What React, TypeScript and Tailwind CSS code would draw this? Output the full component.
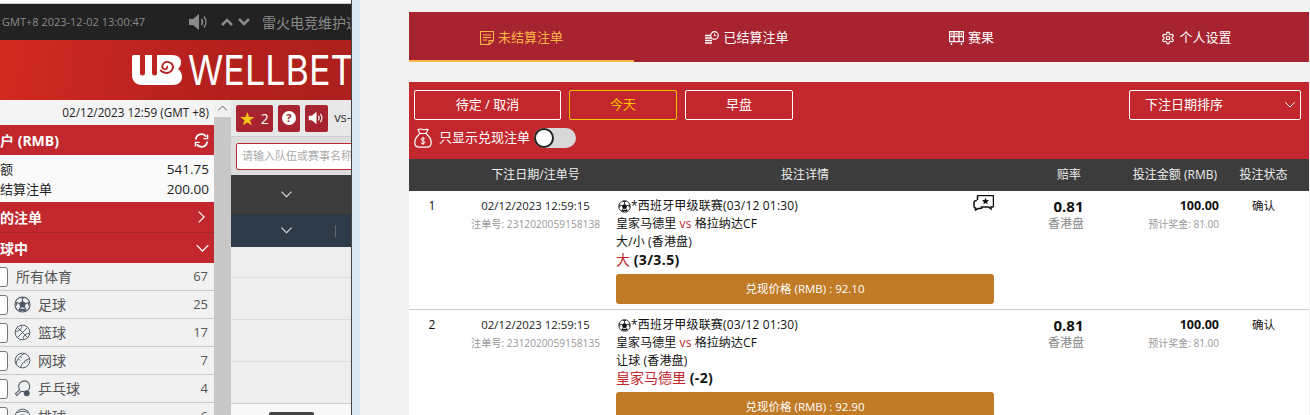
import React from "react";

function Chevron({ dir = "down", className = "" }: { dir?: "down" | "right" | "up"; className?: string }) {
  const d = dir === "down" ? "M2 5l7 7 7-7" : dir === "up" ? "M2 12l7-7 7 7" : "M6 2l7 7-7 7";
  return (
    <svg viewBox="0 0 18 18" className={className} fill="none" stroke="currentColor" strokeWidth="1.5">
      <path d={d} />
    </svg>
  );
}

function Speaker({ className = "" }: { className?: string }) {
  return (
    <svg viewBox="0 0 22 18" className={className} fill="none" stroke="currentColor">
      <path d="M1 6h4l6-5v16l-6-5H1z" fill="currentColor" stroke="none" />
      <path d="M13.5 6c1.2 1.8 1.2 4.2 0 6M16 3.5c2.4 3.2 2.4 7.8 0 11" strokeWidth="1.5" />
    </svg>
  );
}

function Logo() {
  return (
    <svg viewBox="0 0 50 30" className="w-[50px] h-[30px] shrink-0">
      <path
        d="M0 2a2 2 0 0 1 2-2h6v18a2.5 2.5 0 0 0 5 0V0h7v18a2.500 2.500 0 0 0 5 0V0h15c6 0 9 3 9 7 0 3-1 5-3 7 3 2 4 5 4 8 0 5-4 8-9 8H10C4 30 0 26 0 20z"
        fill="#fff"
      />
      <path d="M28 15c4 4 9 4 12 0 3-4-1-9-6-8-4 1-5 6-2 7 2 1 4-1 3-3" fill="none" stroke="#b5211f" strokeWidth="1.8" />
    </svg>
  );
}

function Soccer({ className = "" }: { className?: string }) {
  return (
    <svg viewBox="0 0 18 18" className={className} fill="none" stroke="currentColor" strokeWidth="1.1">
      <circle cx="9" cy="9" r="8" />
      <path d="M9 5.8l3 2.2-1.100 3.600H7.100L6 8z" fill="currentColor" />
      <path d="M9 5.800V3M12 8l2.600-.900M10.900 11.600l1.600 2.200M7.100 11.600l-1.600 2.200M6 8l-2.600-.900" />
      <path d="M6.500 1.600L9 3l2.500-1.400zM16.200 6L14.600 7.100l1.100 3.500zM1.800 6l1.600 1.100-1.100 3.500zM5 15.600l.500-1.800h7l.500 1.800z" fill="currentColor" strokeWidth="0.5" />
    </svg>
  );
}

function Basket({ className = "" }: { className?: string }) {
  return (
    <svg viewBox="0 0 18 18" className={className} fill="none" stroke="currentColor" strokeWidth="1">
      <circle cx="9" cy="9" r="7.8" />
      <path d="M3.5 3.500l11 11M14.500 3.500l-11 11M8 1.300c1 3-1.500 6.500-6.700 6.500M16.700 10c-5 0-7.500 3.500-6.700 6.700" />
    </svg>
  );
}

function Tennis({ className = "" }: { className?: string }) {
  return (
    <svg viewBox="0 0 18 18" className={className} fill="none" stroke="currentColor" strokeWidth="1">
      <circle cx="9" cy="9" r="7.8" />
      <path d="M11 1.500C6 4 3 8 2 13M16.500 7c-4.500 1-8 4.500-9.500 9.700" />
      <path d="M7 5l1.500 1.500M5 7.500l1.500 1.500M11 10.500l1 1.500M13.500 9l.8 1.500" strokeWidth="0.9" />
    </svg>
  );
}

function Pingpong({ className = "" }: { className?: string }) {
  return (
    <svg viewBox="0 0 18 18" className={className} fill="none" stroke="currentColor" strokeWidth="1.1">
      <path d="M6 10.500C4 7 5 3 8.500 1.500 12-.1 16 2 16.500 6c.4 2.500-.5 4-1.500 5" />
      <path d="M6 10.500l-4.500 4L3 16.500l4.500-4.500c1.500 0 2.500 0 3.500.5" />
      <circle cx="13.5" cy="14" r="2.6" fill="currentColor" />
    </svg>
  );
}

function Volley({ className = "" }: { className?: string }) {
  return (
    <svg viewBox="0 0 18 18" className={className} fill="none" stroke="currentColor" strokeWidth="1">
      <circle cx="9" cy="9" r="7.8" />
      <path d="M3 5c4-2 9-2 12 0M2 9c4-2 10-2 14 0" />
    </svg>
  );
}

function SportRow({ icon, label, count }: { icon?: React.ReactNode; label: string; count: number }) {
  return (
    <div className="h-[28px] shrink-0 flex items-center border-b border-[#c8c8c8] text-[#555] bg-[#f1f1f1] pr-[6px] text-[14px]">
      <span className="w-[10px] h-[20px] -ml-[2px] shrink-0 bg-white border border-[#777] rounded-r-[3px]" />
      {icon ? <span className="ml-[6px] w-[17px] h-[17px] shrink-0 text-[#4b5563]">{icon}</span> : null}
      <span className={icon ? "ml-[7px]" : "ml-[8px]"}>{label}</span>
      <span className="ml-auto text-[13px]">{count}</span>
    </div>
  );
}

function LeftWindow() {
  return (
    <div className="w-[352px] h-[415px] shrink-0 flex flex-col overflow-hidden border-r border-[#444] bg-white">
      <div className="h-[4px] shrink-0 bg-white border-b border-[#ccc]" />
      <div className="h-[36px] shrink-0 bg-[#222] text-[#8a8a8a] flex items-center whitespace-nowrap overflow-hidden pl-[2px]">
        <span className="text-[11px] w-[186px] shrink-0">GMT+8 2023-12-02 13:00:47</span>
        <Speaker className="w-[22px] h-[18px] shrink-0 text-[#8a8a8a]" />
        <svg viewBox="0 0 12 8" className="ml-[11px] w-[12px] h-[8px] shrink-0 text-[#8a8a8a]" fill="none" stroke="currentColor" strokeWidth="2.6"><path d="M1 7l5-5 5 5" /></svg>
        <svg viewBox="0 0 12 8" className="ml-[5px] w-[12px] h-[8px] shrink-0 text-[#8a8a8a]" fill="none" stroke="currentColor" strokeWidth="2.6"><path d="M1 1l5 5 5-5" /></svg>
        <span className="ml-[12px] text-[14px]">雷火电竞维护通知</span>
      </div>
      <div className="h-[60px] shrink-0 bg-[linear-gradient(100deg,#d22a20_0%,#bc2320_45%,#b5211d_60%,#ad201d_100%)] flex items-center pl-[132px] overflow-hidden">
        <Logo />
        <span className="ml-[6px] text-white text-[41px] leading-none font-[Inter,sans-serif] font-normal whitespace-nowrap origin-left scale-x-[0.875]">WELLBET</span>
      </div>
      <div className="flex-1 flex min-h-0">
        <div className="w-[214px] shrink-0 flex flex-col overflow-hidden">
          <div className="h-[25px] shrink-0 bg-[#f4f4f4] flex items-center justify-end pr-[5px] text-[11.7px] text-[#222]">02/12/2023 12:59 (GMT +8)</div>
          <div className="h-[30px] shrink-0 bg-[#c1272d] text-white font-bold text-[14px] flex items-center pr-[5px] -ml-[14px]">
            <span>账户 (RMB)</span>
            <svg viewBox="0 0 16 16" className="ml-auto w-[15px] h-[15px]" fill="none" stroke="currentColor" strokeWidth="2"><path d="M2 7a6 6 0 0 1 11-3M14 9a6 6 0 0 1-11 3" /><path d="M14.5 1.500V6H10M1.500 14.500V10H6" strokeWidth="1.5" /></svg>
          </div>
          <div className="h-[47px] shrink-0 bg-[#fafafa] flex flex-col justify-center text-[13px] text-[#222] pr-[5px] leading-[20px]">
            <div className="flex justify-between -ml-[13px]"><span>余额</span><span className="text-[13.5px]">541.75</span></div>
            <div className="flex justify-between -ml-[13px]"><span>未结算注单</span><span className="text-[13.5px]">200.00</span></div>
          </div>
          <div className="h-[31px] shrink-0 bg-[#c1272d] border-b border-[#a6232b] text-white font-bold text-[14px] flex items-center pr-[6px] -ml-[14px]">
            <span>我的注单</span>
            <Chevron dir="right" className="ml-auto w-[14px] h-[14px]" />
          </div>
          <div className="h-[30px] shrink-0 bg-[#c1272d] text-white font-bold text-[14px] flex items-center pr-[4px] -ml-[14px]">
            <span>滚球中</span>
            <Chevron className="ml-auto w-[15px] h-[15px]" />
          </div>
          <SportRow label="所有体育" count={67} />
          <SportRow icon={<Soccer className="w-full h-full" />} label="足球" count={25} />
          <SportRow icon={<Basket className="w-full h-full" />} label="篮球" count={17} />
          <SportRow icon={<Tennis className="w-full h-full" />} label="网球" count={7} />
          <SportRow icon={<Pingpong className="w-full h-full" />} label="乒乓球" count={4} />
          <SportRow icon={<Volley className="w-full h-full" />} label="排球" count={6} />
        </div>
        <div className="w-[17px] shrink-0 bg-[#c8c8c8] flex flex-col">
          <div className="h-[17px] bg-[#f1f1f1] text-[#555] flex items-center justify-center">
            <Chevron dir="up" className="w-[11px] h-[11px]" />
          </div>
        </div>
        <div className="flex-1 min-w-0 flex flex-col overflow-hidden bg-[#eee]">
          <div className="h-[37px] shrink-0 bg-[#e8e8e8] border-b border-[#ccc] flex items-center pl-[5px] gap-[5px] whitespace-nowrap">
            <div className="w-[38px] h-[27px] rounded-[2px] bg-[#a6232f] flex items-center justify-center gap-[6px] text-white text-[14px]"><span className="text-[#f5c518] text-[15px] leading-none">★</span>2</div>
            <div className="w-[23px] h-[27px] rounded-[2px] bg-[#a6232f] flex items-center justify-center">
              <span className="w-[14px] h-[14px] rounded-full bg-white text-[#a6232f] text-[11px] font-bold flex items-center justify-center">?</span>
            </div>
            <div className="w-[24px] h-[27px] rounded-[2px] bg-[#a6232f] flex items-center justify-center text-white"><Speaker className="w-[17px] h-[14px]" /></div>
            <span className="ml-[1px] text-[13px] text-[#333]">vs-</span>
          </div>
          <div className="h-[38px] shrink-0 bg-[#ddd] pl-[5px] flex items-center">
            <div className="w-[130px] h-[27px] shrink-0 bg-white border border-[#c1272d] rounded-[2px] flex items-center pl-[5px] text-[11px] text-[#aaa] whitespace-nowrap">请输入队伍或赛事名称</div>
          </div>
          <div className="h-[39px] shrink-0 bg-[#3c3c3c] text-[#ddd] pl-[49px] flex items-center"><Chevron className="w-[13px] h-[13px]" /></div>
          <div className="h-[33px] shrink-0 bg-[#2e3a48] text-[#ddd] pl-[49px] flex items-center">
            <Chevron className="w-[13px] h-[13px]" />
            <span className="ml-[42px] w-px h-[12px] bg-[#667]" />
          </div>
          <div className="h-[31px] shrink-0 border-b border-[#ddd]" />
          <div className="h-[42px] shrink-0 border-b border-[#ddd]" />
          <div className="h-[42px] shrink-0 border-b border-[#ddd]" />
          <div className="h-[42px] shrink-0 border-b border-[#ccc]" />
          <div className="flex-1 bg-[#f8f8f8] flex justify-center items-end">
            <div className="w-[45px] h-[3px] bg-[#444] rounded-t-[2px]" />
          </div>
        </div>
      </div>
    </div>
  );
}

function IconSheet({ className = "" }: { className?: string }) {
  return (
    <svg viewBox="0 0 14 14" className={className} fill="none" stroke="currentColor" strokeWidth="1.1">
      <path d="M.5.500h13v9l-4 4h-9z" />
      <path d="M3 4h8M3 6.500h8M3 9h4M9 13.500V9.500h4.500" />
    </svg>
  );
}
function IconClockStack({ className = "" }: { className?: string }) {
  return (
    <svg viewBox="0 0 15 14" className={className} fill="none" stroke="currentColor">
      <path d="M1 4.500h7M1 7h7M1 9.500h7M1 12h7" strokeWidth="1.7" />
      <circle cx="10.5" cy="4.500" r="3.8" fill="#a6232f" strokeWidth="1.2" />
      <path d="M10.5 2.500v2.200h1.800" strokeWidth="1" />
    </svg>
  );
}
function IconBoard({ className = "" }: { className?: string }) {
  return (
    <svg viewBox="0 0 15 14" className={className} fill="none" stroke="currentColor" strokeWidth="1.3">
      <path d="M.5.700h14v10H.5zM2.500 12v2M12.500 12v2" />
      <path d="M5 1v9M10 1v9M1 5.500h13M2 3h1.500M6.500 3h2M11.500 3h1.500" />
    </svg>
  );
}
function IconGear({ className = "" }: { className?: string }) {
  return (
    <svg viewBox="0 0 24 24" className={className} fill="none" stroke="currentColor" strokeWidth="2">
      <path d="M12.22 2h-.44a2 2 0 0 0-2 2v.18a2 2 0 0 1-1 1.73l-.43.25a2 2 0 0 1-2 0l-.15-.08a2 2 0 0 0-2.73.73l-.22.38a2 2 0 0 0 .73 2.73l.15.1a2 2 0 0 1 1 1.72v.51a2 2 0 0 1-1 1.74l-.15.09a2 2 0 0 0-.73 2.73l.22.38a2 2 0 0 0 2.73.73l.15-.08a2 2 0 0 1 2 0l.43.25a2 2 0 0 1 1 1.73V20a2 2 0 0 0 2 2h.44a2 2 0 0 0 2-2v-.18a2 2 0 0 1 1-1.73l.43-.25a2 2 0 0 1 2 0l.15.08a2 2 0 0 0 2.73-.73l.22-.39a2 2 0 0 0-.73-2.73l-.15-.08a2 2 0 0 1-1-1.74v-.5a2 2 0 0 1 1-1.74l.15-.09a2 2 0 0 0 .73-2.73l-.22-.38a2 2 0 0 0-2.73-.73l-.15.08a2 2 0 0 1-2 0l-.43-.25a2 2 0 0 1-1-1.73V4a2 2 0 0 0-2-2z" />
      <circle cx="12" cy="12" r="3" />
    </svg>
  );
}
function MoneyBag({ className = "" }: { className?: string }) {
  return (
    <svg viewBox="0 0 18 20" className={className} fill="none" stroke="currentColor" strokeWidth="1.2">
      <path d="M6 5.500L4 1.500c2-1 3-.5 5 0s3-.5 5 0l-2 4z" />
      <path d="M6 5.500C3 8 .8 11 .8 14.500c0 3 2 4.700 4.200 4.700h8c2.200 0 4.200-1.700 4.200-4.700C17.200 11 15 8 12 5.500" />
      <path d="M11 11c-.5-1-3.500-1.300-3.800.3C7 13 11 12.500 10.900 14.500c-.2 1.500-3.300 1.300-3.900.2M9 8.800v8" strokeWidth="1" />
    </svg>
  );
}
function ChatStar({ className = "" }: { className?: string }) {
  return (
    <svg viewBox="0 0 21 16" className={className} fill="none" stroke="currentColor" strokeWidth="1.5">
      <path d="M4.500 5V1.500a1 1 0 0 1 1-1h14a1 1 0 0 1 1 1v9.500a1 1 0 0 1-1 1h-1.500v2l-2.500-2h-8" />
      <path d="M4 5.500c-1.500 0-3 .5-3 2v4c0 1 .5 1.500 1.500 1.500v2l2.500-1.500h2.500c1 0 1.500-.5 1.500-1" />
      <path d="M12.500 2.800l1 2.300 2.500.2-1.900 1.600.6 2.400-2.200-1.300-2.200 1.300.6-2.400L9 5.300l2.500-.2z" fill="currentColor" stroke="none" />
    </svg>
  );
}

const tabs = [
  { label: "未结算注单", icon: <IconSheet className="w-[14px] h-[14px]" />, active: true },
  { label: "已结算注单", icon: <IconClockStack className="w-[15px] h-[14px]" /> },
  { label: "赛果", icon: <IconBoard className="w-[15px] h-[14px]" /> },
  { label: "个人设置", icon: <IconGear className="w-[14px] h-[14px]" /> },
];

function Tabs() {
  return (
    <div className="h-[50px] grid grid-cols-4 bg-[#a6232f] text-[13px]">
      {tabs.map((t) => (
        <div
          key={t.label}
          className={
            t.active
              ? "flex items-center justify-center gap-[4px] text-[#ffb74a] border-b-2 border-[#ffb74a] pt-[3px]"
              : "flex items-center justify-center gap-[4px] text-white border-b-2 border-transparent pt-[3px]"
          }
        >
          {t.icon}
          <span>{t.label}</span>
        </div>
      ))}
    </div>
  );
}

function Filters() {
  return (
    <div className="mt-[20px] h-[77px] bg-[#c1272d] pl-[5px] pt-[8px] pr-[8px] text-white text-[13px]">
      <div className="flex gap-[8px] h-[30px]">
        <div className="w-[147px] border border-white rounded-[2px] flex items-center justify-center">待定 / 取消</div>
        <div className="w-[108px] border border-[#ffc400] text-[#ffc400] rounded-[2px] flex items-center justify-center">今天</div>
        <div className="w-[108px] border border-white rounded-[2px] flex items-center justify-center">早盘</div>
        <div className="ml-auto w-[172px] border border-white rounded-[2px] flex items-center pl-[15px] pr-[4px]">
          <span>下注日期排序</span>
          <Chevron className="ml-auto w-[12px] h-[12px]" />
        </div>
      </div>
      <div className="mt-[8px] flex items-center h-[20px]">
        <MoneyBag className="w-[18px] h-[20px] shrink-0" />
        <span className="ml-[7px]">只显示兑现注单</span>
        <div className="ml-[4px] w-[42px] h-[20px] rounded-full bg-[#d8d8d8] flex items-center">
          <span className="w-[20px] h-[20px] rounded-full bg-white border-2 border-[#222]" />
        </div>
      </div>
    </div>
  );
}

const cols = "grid grid-cols-[46px_161px_378px_29px_84px_112px_89px]";

function TableHead() {
  return (
    <div className={`${cols} h-[32px] items-center bg-[#3c3c3c] text-[#eee] text-[12px]`}>
      <span />
      <span className="text-center">下注日期/注单号</span>
      <span className="text-center">投注详情</span>
      <span />
      <span className="text-center pl-[8px]">赔率</span>
      <span className="text-right pr-[2px]">投注金额 (RMB)</span>
      <span className="text-center">投注状态</span>
    </div>
  );
}

type Bet = { no: number; id: string; market: string; pick: string; line: string; cash: string; chat?: boolean; tight?: boolean };

function BetRow({ bet }: { bet: Bet }) {
  return (
    <div className={`${cols} bg-white h-[119px] border-b border-[#ccc] text-[#111] pt-[6px]`}>
      <div className="text-center text-[12px] leading-[18px]">{bet.no}</div>
      <div className="text-center leading-[18px]">
        <div className="text-[11.4px] text-[#222] font-medium">02/12/2023 12:59:15</div>
        <div className="text-[10.2px] text-[#999]">注单号: {bet.id}</div>
      </div>
      <div className="text-[12px] leading-[18px]">
        <div className="flex items-center h-[18px] tracking-[0.18px]">
          <Soccer className="ml-[2px] w-[13px] h-[13px] text-[#111] shrink-0" />
          <span>*西班牙甲级联赛(03/12 01:30)</span>
        </div>
        <div className="tracking-[0.08px]">皇家马德里 <span className="text-[#c1272d]">vs</span> 格拉纳达CF</div>
        <div className="tracking-[0.15px]">{bet.market}</div>
        <div className={bet.tight ? "text-[14px] leading-[18px] -mt-px" : "text-[14px] leading-[18px]"}>
          <span className="text-[#c1272d]">{bet.pick}</span> <b className="tracking-[0.4px]">{bet.line}</b>
        </div>
        <div className="mt-[5px] h-[30px] rounded-[3px] bg-[#c17a26] text-white text-[11.5px] flex items-center justify-center">兑现价格 (RMB) : {bet.cash}</div>
      </div>
      <div className="flex justify-start -ml-[21px] -mt-[2px]">
        {bet.chat ? <ChatStar className="w-[21px] h-[16px] shrink-0 text-[#111]" /> : null}
      </div>
      <div className="text-center">
        <div className="text-[15px] font-bold leading-[18px] text-[#111] pl-[7px]">0.81</div>
        <div className="text-[12px] text-[#888] leading-[18px] pl-[2px]">香港盘</div>
      </div>
      <div className="text-right">
        <div className="text-[12.5px] font-bold leading-[18px]">100.00</div>
        <div className="text-[10px] text-[#999] leading-[18px]">预计奖金: 81.00</div>
      </div>
      <div className="text-center text-[11.5px] leading-[18px]">确认</div>
    </div>
  );
}

export default function App() {
  return (
    <div className="w-[1310px] h-[415px] overflow-hidden flex bg-[#f3f3f3] font-['Open_Sans','Noto_Sans_CJK_SC',sans-serif]">
      <LeftWindow />
      <div className="w-[8px] shrink-0 bg-[#dce9f5]" />
      <div className="flex-1 min-w-0 pl-[49px] pr-px pt-[12px] overflow-hidden">
        <Tabs />
        <Filters />
        <TableHead />
        <BetRow bet={{ no: 1, id: "2312020059158138", market: "大/小 (香港盘)", pick: "大", line: "(3/3.5)", cash: "92.10", chat: true }} />
        <BetRow bet={{ no: 2, id: "2312020059158135", market: "让球 (香港盘)", pick: "皇家马德里", line: "(-2)", cash: "92.90", tight: true }} />
      </div>
    </div>
  );
}
